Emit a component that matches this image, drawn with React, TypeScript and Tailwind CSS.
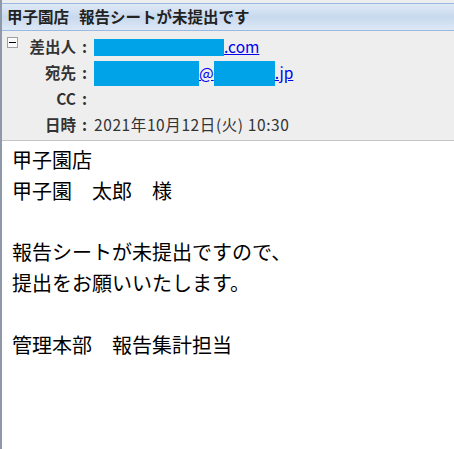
import React from "react";

const font = { fontFamily: '"Noto Sans CJK JP", "Noto Sans", sans-serif' };

function Row({ label, children }: { label: string; children?: React.ReactNode }) {
  return (
    <div className="flex h-[26px] items-center">
      <div className="flex w-[92px] shrink-0 justify-end pr-[7px] text-[15.5px] font-bold text-[#333333]">
        <span>{label}</span>
        <span className="ml-[6px]">:</span>
      </div>
      <div className="flex items-center text-[15.5px] text-[#333333]">{children}</div>
    </div>
  );
}

function Box({ w }: { w: number }) {
  return <span className="inline-block h-[25px] bg-[#00a2e8]" style={{ width: w }} />;
}

export default function App() {
  return (
    <div className="h-[449px] w-[454px] overflow-hidden bg-[#eeeeee]" style={font}>
      <div className="flex h-full border-l-2 border-[#8e98a8]">
        <div className="flex flex-1 flex-col pt-[3px]">
          {/* title bar */}
          <div className="flex h-[28px] items-center border-y border-[#9ab8e0] bg-gradient-to-b from-[#e0eaf6] via-[#c8d9ee] to-[#dde8f5] pl-[5px] text-[15.5px] font-bold leading-none text-[#222222]">
            <span>甲子園店</span>
            <span className="ml-[10px]">報告シートが未提出です</span>
          </div>
          {/* header */}
          <div className="relative flex h-[110px] flex-col border-b border-[#c4c4c4] bg-[#eeeeee] pt-[3px]">
            <div className="absolute left-[5px] top-[6px] flex h-[11px] w-[11px] items-center justify-center border border-[#a0a0a0] bg-[#fafafa]">
              <span className="block h-[1px] w-[7px] bg-black" />
            </div>
            <Row label="差出人">
              <span className="inline-block h-[17px] w-[130px] bg-[#00a2e8]" />
              <span className="text-[#0000ee] underline">.com</span>
            </Row>
            <Row label="宛先">
              <Box w={105} />
              <span className="text-[#0000ee] underline">@</span>
              <Box w={61} />
              <span className="text-[#0000ee] underline">.jp</span>
            </Row>
            <Row label="CC" />
            <Row label="日時">
              <span className="tracking-[0.6px]">2021年10月12日(火) 10:30</span>
            </Row>
          </div>
          {/* body */}
          <div className="flex-1 bg-white pl-[10px] pt-[4px] text-[20px] leading-[30.8px] text-black">
            <div>甲子園店</div>
            <div>甲子園　太郎　様</div>
            <div>&nbsp;</div>
            <div>報告シートが未提出ですので、</div>
            <div>提出をお願いいたします。</div>
            <div>&nbsp;</div>
            <div>管理本部　報告集計担当</div>
          </div>
        </div>
      </div>
    </div>
  );
}
